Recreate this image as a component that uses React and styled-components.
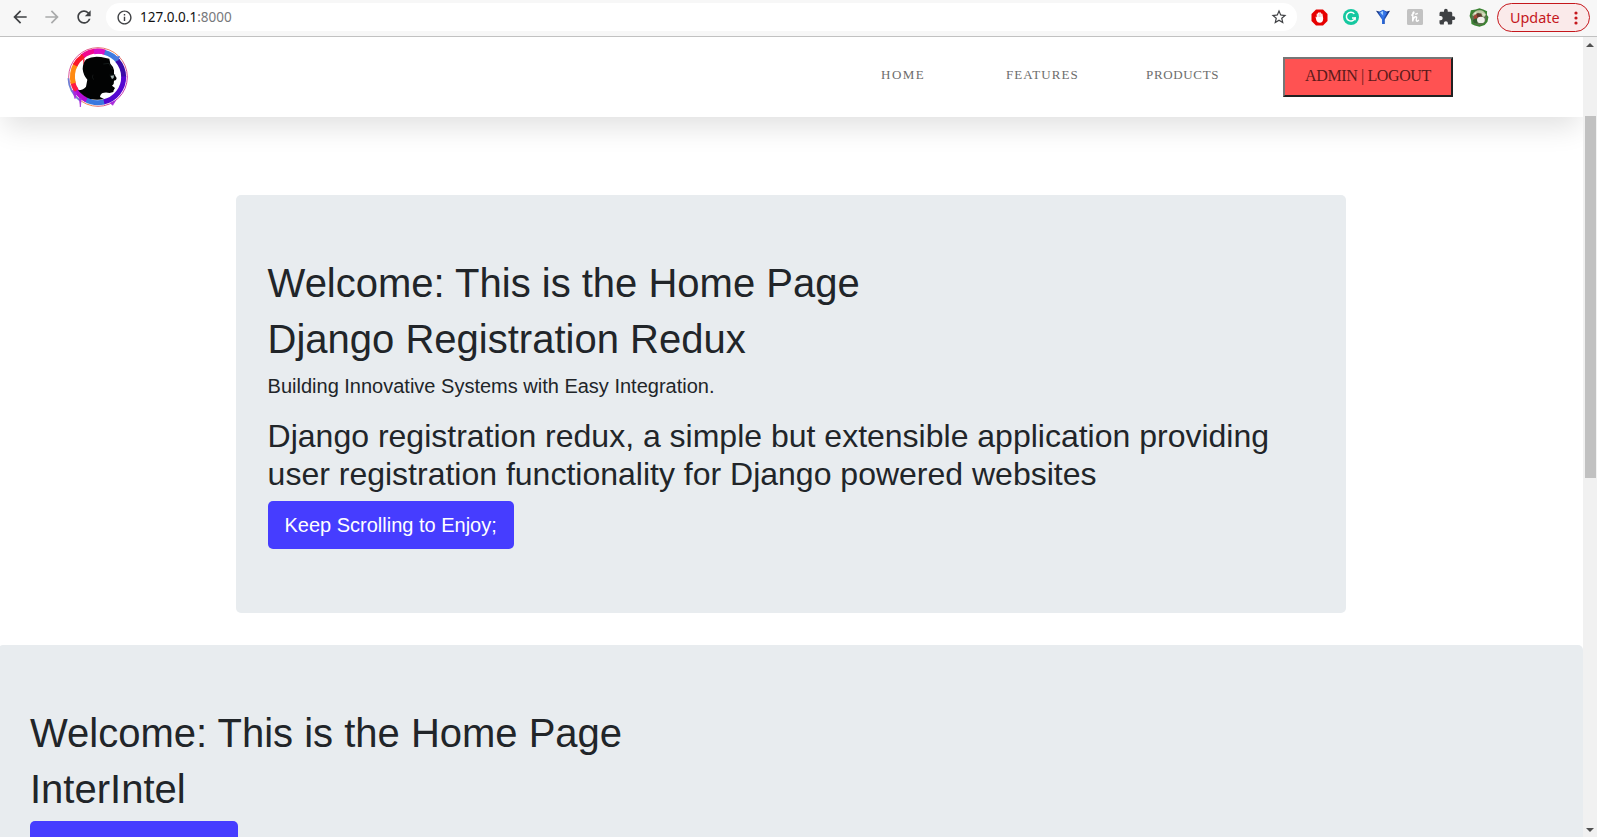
import React from "react";
import styled, { createGlobalStyle } from "styled-components";
import {
  MdArrowBack,
  MdArrowForward,
  MdRefresh,
  MdInfoOutline,
  MdStarBorder,
  MdExtension,
} from "react-icons/md";

const GlobalStyle = createGlobalStyle`
  *, *::before, *::after { box-sizing: border-box; }
  html, body, #root { height: 100%; margin: 0; overflow: hidden; }
  body {
    background: #fff;
    color: #212529;
    font: 400 16px/1.5 "Liberation Sans", Arial, sans-serif;
  }
  h1, h2, p { margin: 0; font-weight: 400; }
`;

const Window = styled.div`
  display: flex;
  flex-direction: column;
  height: 100vh;
`;

/* Browser toolbar */
const Toolbar = styled.header`
  display: flex;
  align-items: flex-start;
  flex: none;
  height: 37px;
  padding: 3px 7px 0 10px;
  background: #f7f7f7;
  border-bottom: 1px solid #c1c1c1;
  font-family: "Noto Sans", sans-serif;
`;

const NavButtons = styled.div`
  display: flex;
  align-items: center;
  gap: 12px;
  height: 28px;
  margin-right: 12px;
`;

const ToolIcon = styled.span`
  display: flex;
  align-items: center;
  justify-content: center;
  width: 20px;
  height: 20px;
  color: ${(p) => p.$color || "#3f4144"};
`;

const AddressBar = styled.div`
  display: flex;
  align-items: center;
  flex: 1;
  height: 28px;
  padding: 0 8px;
  border-radius: 14px;
  background: #fff;
`;

const Url = styled.span`
  flex: 1;
  margin-left: 6px;
  font-size: 13.5px;
  line-height: 28px;
  color: #111;
`;

const Port = styled.span`
  color: #77797c;
`;

const Extensions = styled.div`
  display: flex;
  align-items: center;
  gap: 12px;
  height: 28px;
  margin: 0 8px 0 12px;
`;

const UpdateButton = styled.button`
  display: flex;
  align-items: center;
  justify-content: space-between;
  width: 93px;
  height: 29px;
  padding: 0 11px 0 12px;
  border: 1px solid #c5171c;
  border-radius: 15px;
  background: #faeaea;
  color: #c5171c;
  font: 400 14.4px/27px "Noto Sans", sans-serif;
`;

/* Page viewport and its scrollbar */
const Viewport = styled.div`
  display: flex;
  flex: 1;
  min-height: 0;
`;

const Page = styled.main`
  flex: 1;
  min-width: 0;
  overflow: hidden;
`;

const Scrollbar = styled.div`
  display: flex;
  flex-direction: column;
  align-items: center;
  flex: none;
  width: 14px;
  padding: 6px 0 5px;
  background: #f1f1f1;
`;

const Thumb = styled.div`
  width: 11px;
  height: 362px;
  margin: 69px 0 auto 0;
  background: #c1c1c1;
`;

/* Site navigation */
const Navbar = styled.nav`
  display: flex;
  align-items: center;
  height: 80px;
  padding: 0 130px 0 68px;
  background: #fff;
  box-shadow: 0 14px 28px -4px rgba(0, 0, 0, 0.12);
`;

const Links = styled.div`
  display: flex;
  align-items: center;
  flex: 1;
  justify-content: flex-end;
`;

const NavLink = styled.a`
  width: ${(p) => p.$width}px;
  margin-bottom: 4px;
  font: 400 13px/20px "Liberation Serif", serif;
  letter-spacing: ${(p) => p.$spacing}px;
  color: #6c6c6c;
  white-space: nowrap;
`;

const LogoutButton = styled.button`
  width: 170px;
  height: 40px;
  padding: 0 0 3px;
  border: 2px solid;
  border-color: #767676 #212121 #212121 #767676;
  background: #ff5252;
  color: #5c1a1a;
  font: 400 16px/20px "Liberation Serif", serif;
  letter-spacing: -0.38px;
  white-space: nowrap;
`;

/* Content */
const Container = styled.div`
  width: 1110px;
  margin: 78px auto 0 235.6px;
`;

const Jumbotron = styled.section`
  margin: 0 0 32px ${(p) => (p.$bleed ? "-2px" : "0")};
  padding: 64px 32px;
  border-radius: 5px;
  background: #e8ecef;
`;

const Title = styled.h1`
  margin-bottom: 8px;
  font-size: 40px;
  line-height: 48px;
`;

const Lead = styled.p`
  margin-bottom: 16px;
  font-size: 20px;
  line-height: 30px;
`;

const Subtitle = styled.h2`
  margin-bottom: 7px;
  font-size: 32px;
  line-height: 38.4px;
`;

const PrimaryButton = styled.button`
  display: block;
  width: ${(p) => p.$width}px;
  height: 48px;
  padding: 0;
  border: 0;
  border-radius: 5px;
  background: #463dff;
  color: #fff;
  font: 400 20px/30px "Liberation Sans", Arial, sans-serif;
  white-space: nowrap;
`;

const LogoMark = styled.svg`
  flex: none;
  overflow: visible;
`;

const Logo = () => (
  <LogoMark width="60" height="60" viewBox="204 141 180 180">
    <defs>
      <linearGradient id="rim" x1="0" y1="0.2" x2="1" y2="0.7">
        <stop offset="0" stopColor="#d84aa8" />
        <stop offset="0.6" stopColor="#f08a55" />
        <stop offset="1" stopColor="#c22bb8" />
      </linearGradient>
    </defs>
    <circle cx="294" cy="231" r="88" fill="#fff" stroke="url(#rim)" strokeWidth="3" />
    <g fill="none" strokeWidth="15">
      <path d="M246 170 A77 77 0 0 1 316 157" stroke="#f0058f" />
      <path d="M282 155 A77 77 0 0 1 316 157" stroke="#d80fc8" />
      <path d="M314 157 A77 77 0 0 1 354 183" stroke="#3f7be0" />
      <path d="M352 181 A77 77 0 0 1 371 231" stroke="#3b0aa8" />
      <path d="M371 229 A77 77 0 0 1 310 306" stroke="#5506d0" />
      <path d="M312 306 A77 77 0 0 1 256 298" stroke="#3978df" />
      <path d="M260 300 A77 77 0 0 1 225 265" stroke="#b40bd5" />
      <path d="M229 272 A77 77 0 0 1 218 244" stroke="#ff1b42" />
      <path d="M220 250 A77 77 0 0 1 227 193" stroke="#ff8a12" />
      <path d="M225 196 A77 77 0 0 1 250 168" stroke="#fa1729" />
    </g>
    <path d="M205 235 A89 89 0 0 0 240 302" fill="none" stroke="#6c80d5" strokeWidth="5" />
    <path d="M218 270 L225 296 L230 278 M238 294 L241 321 L244 294 M330 308 L338 316 L348 300" fill="#a92bdc" stroke="#a92bdc" strokeWidth="2" />
    <path d="M341 171 L360 168 L354 183 Z" fill="#4c78dd" />
    <path d="M249 178 L251 199 L254 178 Z" fill="#f51a32" />
    <path
      d="M234 271 Q252 269 258 260 L262 239 Q250 226 248 207 Q249 187 259 178 Q277 167 303 171 L328 176 L331 191 Q340 199 342 211 L342 222 L350 234 L348 240 L342 242 L341 252 L336 257 L345 264 L341 271 L340 276 L329 279 Q316 275 306 280 Q300 285 300 291 L312 297 Q292 302 270 297 Q250 290 234 271 Z"
      fill="#020303"
    />
    <path d="M331 227 L342 225 L341 234 L336 237 Z" fill="#a5b4b1" />
    <path d="M328 225 H346" stroke="#101919" strokeWidth="2" />
    <path d="M279 224 Q274 231 281 239" fill="none" stroke="#1b2020" strokeWidth="2" />
    <path d="M310 192 L327 190 L336 207" fill="none" stroke="#1c2624" strokeWidth="2" />
  </LogoMark>
);

const AdBlockIcon = () => (
  <svg width="17" height="17" viewBox="0 0 17 17">
    <path d="M5 0.5 H12 L16.5 5 V12 L12 16.5 H5 L0.5 12 V5 Z" fill="#e60000" />
    <path d="M4.5 7.8 Q5.2 7.4 5.7 8.6 V4.8 Q6.3 4 7 4.8 V3.8 Q7.7 3 8.4 3.8 V3.6 Q9.2 2.8 9.9 3.8 V4.8 Q10.7 4 11.4 4.8 L12.2 9.4 Q12 13.7 8.8 13.7 Q6.3 13.7 5.4 11.4Z" fill="#fff" />
    <path d="M7.1 5 V8 M8.5 4.2 V8 M9.9 4.8 V8" stroke="#ee7777" strokeWidth=".4" />
  </svg>
);

const GrammarlyIcon = () => (
  <svg width="16" height="16" viewBox="0 0 16 16">
    <circle cx="8" cy="8" r="8" fill="#15c8a0" />
    <path d="M11.3 4.9 A4.4 4.4 0 1 0 12 9 H9" fill="none" stroke="#fff" strokeWidth="1.5" />
    <path d="M12.2 8.3 V11.3" stroke="#fff" strokeWidth="1.2" />
  </svg>
);

const VIcon = () => (
  <svg width="16" height="16" viewBox="0 0 16 16">
    <defs>
      <linearGradient id="vblue">
        <stop offset="0" stopColor="#10276c" />
        <stop offset=".45" stopColor="#2f6fe0" />
        <stop offset="1" stopColor="#0c1f68" />
      </linearGradient>
    </defs>
    <path d="M1 1.8 L4.5 2.4 L8 .8 L11.5 2.4 L15 1.8 L9.8 10.4 V15 H7 V10.4 Z" fill="url(#vblue)" />
    <path d="M8 1 L12 4 L8 10 L4 4Z" fill="#3474e8" />
    <path d="M5.2 3.6 L8 2 L8.2 6.4Z" fill="#a9d3fc" />
  </svg>
);

const HoneyIcon = () => (
  <svg width="16" height="16" viewBox="0 0 16 16">
    <rect width="16" height="16" rx="1.5" fill="#c2c2c2" />
    <path d="M4.3 6.2 Q5.6 6 6.8 4.2 Q7.2 2.9 6.4 3.1 Q5.6 3.6 5.8 6 L5.7 12.4 Q6.4 8.2 8.6 7.7 Q10.1 7.5 9.5 9.4 Q8.8 12.2 10 12.2 Q11 12 11.8 10.8 M8.2 5.4 L10.8 4.4" fill="none" stroke="#fff" strokeWidth="1.4" />
  </svg>
);

const AvatarIcon = () => (
  <svg width="21" height="21" viewBox="0 0 21 21">
    <path d="M2 3 L7 2 L11 .8 L15 2 L19 4 L18.8 8 L20.4 10 L19.4 15 L16.5 18.5 L11 20.2 L6 19 L2.6 17.4 L2.2 13 L.6 9Z" fill="#3b8332" />
    <circle cx="10.5" cy="10.5" r="7.8" fill="#5f7350" />
    <path d="M3.4 8 Q6 3 11 3 Q16 2.6 18 8 L15 10 L10 5.5 L5 9Z" fill="#b9c9a0" />
    <path d="M5 9 Q8 5 11 8 L10 11 L5.4 13Z" fill="#a54435" />
    <path d="M8 6 L13 6.4 L14 11 L9 12Z" fill="#5e3c2e" />
    <ellipse cx="12.5" cy="13" rx="4.1" ry="3.4" fill="#f1efed" />
    <path d="M4 13 L8 11 L9 17 L5 16Z" fill="#315f2d" />
    <path d="M13 5 L17 7 L16 10Z" fill="#dedfc8" />
    <path d="M5 6 L8 4.4 L7 7.4Z" fill="#f0e9da" />
  </svg>
);

const MoreDots = () => (
  <svg width="4" height="14" viewBox="0 0 4 14" fill="#c5171c">
    <circle cx="2" cy="2" r="1.6" />
    <circle cx="2" cy="7" r="1.6" />
    <circle cx="2" cy="12" r="1.6" />
  </svg>
);

const ScrollArrow = ({ down }) => (
  <svg width="8" height="4" viewBox="0 0 8 4">
    <path d={down ? "M0 0 H8 L4 4Z" : "M0 4 H8 L4 0Z"} fill="#505050" />
  </svg>
);

const extensions = [AdBlockIcon, GrammarlyIcon, VIcon, HoneyIcon];

const links = [
  { label: "HOME", width: 125, spacing: 1.5 },
  { label: "FEATURES", width: 140, spacing: 1.05 },
  { label: "PRODUCTS", width: 137, spacing: 0.65 },
];

export default function App() {
  return (
    <Window>
      <GlobalStyle />
      <Toolbar>
        <NavButtons>
          <ToolIcon><MdArrowBack size={20} /></ToolIcon>
          <ToolIcon $color="#a9aaab"><MdArrowForward size={20} /></ToolIcon>
          <ToolIcon><MdRefresh size={20} /></ToolIcon>
        </NavButtons>
        <AddressBar>
          <ToolIcon><MdInfoOutline size={17} /></ToolIcon>
          <Url>127.0.0.1<Port>:8000</Port></Url>
          <ToolIcon><MdStarBorder size={18} /></ToolIcon>
        </AddressBar>
        <Extensions>
          {extensions.map((Icon, i) => (
            <ToolIcon key={i}><Icon /></ToolIcon>
          ))}
          <ToolIcon><MdExtension size={18} /></ToolIcon>
          <ToolIcon><AvatarIcon /></ToolIcon>
        </Extensions>
        <UpdateButton>Update<MoreDots /></UpdateButton>
      </Toolbar>
      <Viewport>
        <Page>
          <Navbar>
            <Logo />
            <Links>
              {links.map((l) => (
                <NavLink key={l.label} $width={l.width} $spacing={l.spacing}>{l.label}</NavLink>
              ))}
              <LogoutButton>ADMIN | LOGOUT</LogoutButton>
            </Links>
          </Navbar>
          <Container>
            <Jumbotron>
              <Title>Welcome: This is the Home Page</Title>
              <Title>Django Registration Redux</Title>
              <Lead>Building Innovative Systems with Easy Integration.</Lead>
              <Subtitle>
                Django registration redux, a simple but extensible application providing user
                registration functionality for Django powered websites
              </Subtitle>
              <PrimaryButton $width={246}>Keep Scrolling to Enjoy;</PrimaryButton>
            </Jumbotron>
          </Container>
          <Jumbotron $bleed>
            <Title>Welcome: This is the Home Page</Title>
            <Title>InterIntel</Title>
            <PrimaryButton $width={208} />
          </Jumbotron>
        </Page>
        <Scrollbar>
          <ScrollArrow />
          <Thumb />
          <ScrollArrow down />
        </Scrollbar>
      </Viewport>
    </Window>
  );
}
